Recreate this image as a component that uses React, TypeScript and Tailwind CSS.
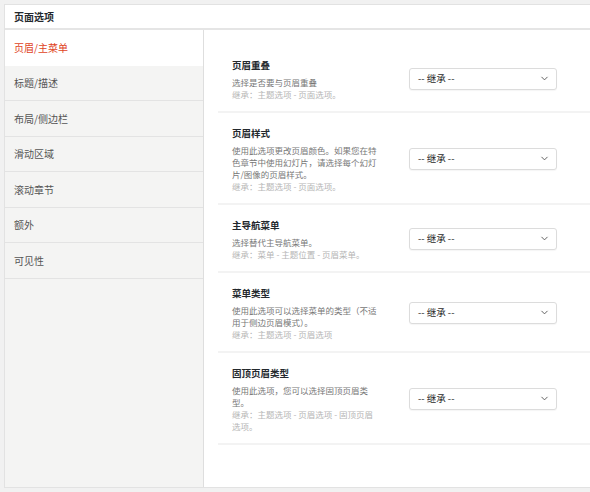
import { ChevronDown } from 'lucide-react'

type Option = {
  title: string
  desc: string
  inherit: string
}

const tabs = ['页眉/主菜单', '标题/描述', '布局/侧边栏', '滑动区域', '滚动章节', '额外', '可见性']

const options: Option[] = [
  { title: '页眉重叠', desc: '选择是否要与页眉重叠', inherit: '继承：主题选项 - 页面选项。' },
  {
    title: '页眉样式',
    desc: '使用此选项更改页眉颜色。如果您在特色章节中使用幻灯片，请选择每个幻灯片/图像的页眉样式。',
    inherit: '继承：主题选项 - 页面选项。',
  },
  { title: '主导航菜单', desc: '选择替代主导航菜单。', inherit: '继承：菜单 - 主题位置 - 页眉菜单。' },
  {
    title: '菜单类型',
    desc: '使用此选项可以选择菜单的类型（不适用于侧边页眉模式）。',
    inherit: '继承：主题选项 - 页眉选项',
  },
  {
    title: '固顶页眉类型',
    desc: '使用此选项，您可以选择固顶页眉类型。',
    inherit: '继承：主题选项 - 页眉选项 - 固顶页眉选项。',
  },
]

const font = { fontFamily: '"Noto Sans CJK SC", "Liberation Sans", sans-serif' }

export default function App() {
  return (
    <div className="h-[492px] w-[590px] overflow-hidden bg-[#f1f1f1] pl-[4px] pt-[4px]" style={font}>
      <div className="flex h-[484px] w-[600px] flex-col border border-[#e2e2e2] bg-white">
        {/* Header */}
        <div className="flex h-[25px] shrink-0 items-center border-b-2 border-[#e5e5e5] pl-[9px] text-[10px] font-bold text-[#23282d]">
          页面选项
        </div>

        <div className="flex flex-1">
          {/* Sidebar tabs */}
          <div className="w-[199px] shrink-0 border-r border-[#dedede] bg-[#f4f4f3]">
            {tabs.map((t, i) => (
              <div
                key={t}
                className={
                  i === 0
                    ? 'flex h-[35.5px] items-center bg-white pl-[9px] text-[10px] text-[#e0431d]'
                    : 'flex h-[35.5px] items-center border-b border-[#e3e3e3] pl-[9px] text-[10px] text-[#555]'
                }
              >
                {t}
              </div>
            ))}
          </div>

          {/* Options */}
          <div className="flex-1 pl-[14px] pt-[15px]">
            {options.map((o) => (
              <div key={o.title} className="flex items-center border-b-2 border-[#f3f3f3] pb-[11px] pl-[14px] pt-[12px]">
                <div className="w-[146px]">
                  <div className="text-[9.5px] font-bold leading-[16px] text-[#23282d]">{o.title}</div>
                  <div className="mt-[3px] text-[8.5px] leading-[12px] text-[#777]">{o.desc}</div>
                  <div className="text-[8.5px] leading-[12px] text-[#b5b5b5]">{o.inherit}</div>
                </div>
                <div className="ml-[31px] flex h-[22px] w-[148px] items-center justify-between rounded-[3px] border border-[#dcdcdc] bg-white pl-[8px] pr-[6px] text-[9.5px] text-[#2c2c2c] shadow-[0_1px_1px_rgba(0,0,0,0.04)]">
                  <span>-- 继承 --</span>
                  <ChevronDown className="h-[11px] w-[11px] text-[#555]" strokeWidth={2} />
                </div>
              </div>
            ))}
          </div>
        </div>
      </div>
    </div>
  )
}
